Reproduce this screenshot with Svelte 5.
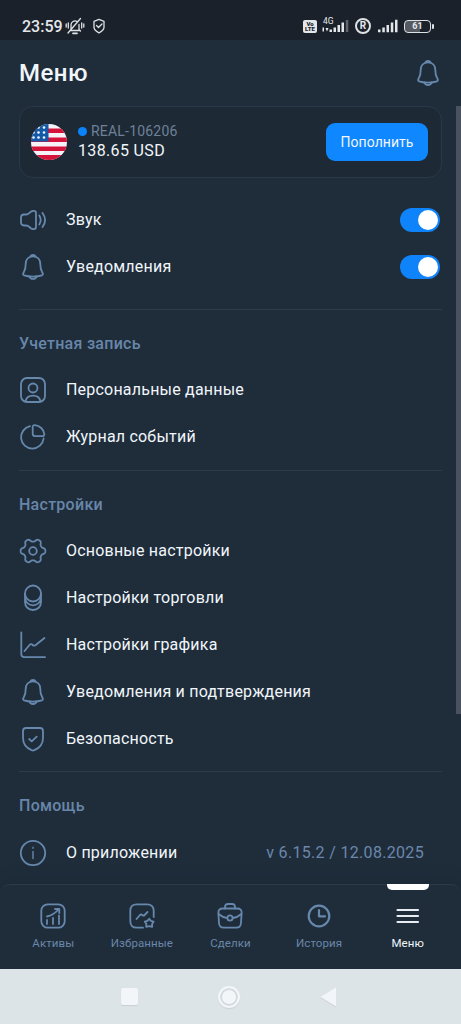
<script lang="ts">
  type IconName = 'sound' | 'bell' | 'person' | 'pie' | 'gear' | 'coins' | 'chart' | 'shield' | 'info'
  type TabIcon = 'assets' | 'favorites' | 'deals' | 'history' | 'menu'

  interface MenuItem {
    icon: IconName
    label: string
    note?: string
  }

  interface Section {
    title: string
    items: MenuItem[]
  }

  interface Tab {
    id: TabIcon
    label: string
  }

  const sections: Section[] = [
    {
      title: 'Учетная запись',
      items: [
        { icon: 'person', label: 'Персональные данные' },
        { icon: 'pie', label: 'Журнал событий' },
      ],
    },
    {
      title: 'Настройки',
      items: [
        { icon: 'gear', label: 'Основные настройки' },
        { icon: 'coins', label: 'Настройки торговли' },
        { icon: 'chart', label: 'Настройки графика' },
        { icon: 'bell', label: 'Уведомления и подтверждения' },
        { icon: 'shield', label: 'Безопасность' },
      ],
    },
    {
      title: 'Помощь',
      items: [{ icon: 'info', label: 'О приложении', note: 'v 6.15.2 / 12.08.2025' }],
    },
  ]

  const tabs: Tab[] = [
    { id: 'assets', label: 'Активы' },
    { id: 'favorites', label: 'Избранные' },
    { id: 'deals', label: 'Сделки' },
    { id: 'history', label: 'История' },
    { id: 'menu', label: 'Меню' },
  ]

  // six rounded teeth around the centre of a 28px box
  const gearPath =
    'M' +
    Array.from({ length: 120 }, (_, i) => {
      const angle = (i * Math.PI) / 60
      const wave = Math.cos(6 * angle)
      const radius = 10.9 + 1.6 * Math.tanh(1.6 * wave)
      return `${(14 + radius * Math.cos(angle)).toFixed(2)} ${(14 + radius * Math.sin(angle)).toFixed(2)}`
    }).join('L') +
    'Z'

  let toggles = $state<{ icon: IconName; label: string; on: boolean }[]>([
    { icon: 'sound', label: 'Звук', on: true },
    { icon: 'bell', label: 'Уведомления', on: true },
  ])
  let activeTab = $state<TabIcon>('menu')
</script>

{#snippet icon(name: IconName)}
  <svg class="icon" viewBox="0 0 28 28" width="28" height="28">
    {#if name === 'sound'}
      <path d="M5 8.500h2.200c1.200 0 2-.4 3-1.300l1.600-1.400c1.500-1.200 5.200-1.500 5.200 1.200v14c0 2.700-3.700 2.400-5.200 1.200l-1.600-1.400c-1-.9-1.800-1.300-3-1.300H5c-2 0-3-1.200-3-3v-5c0-1.800 1-3 3-3z" />
      <path d="M20.300 9.500c1.700 2.700 1.700 6.300 0 9M23.500 7c3.200 4.300 3.200 9.700 0 14" />
    {:else if name === 'bell'}
      <path d="M14 3.300c-4.800 0-7.300 3.400-7.300 7.700 0 4.300-.5 6-1.800 8-1 1.600-1.300 2.900.2 3.400 4.500 1.500 13.300 1.500 17.800 0 1.500-.5 1.200-1.800.2-3.400-1.300-2-1.800-3.700-1.800-8 0-4.300-2.500-7.700-7.300-7.700z" />
      <path d="M11.500 3.400c.7-1.900 4.300-1.900 5 0M10.300 23.500c1 3.300 6.400 3.300 7.400 0" />
    {:else if name === 'person'}
      <rect x="2" y="2" width="24" height="24" rx="6" />
      <circle cx="14" cy="12" r="4.500" />
      <path d="M6.500 25.200c.8-3.600 3.800-5.500 7.500-5.500s6.700 1.900 7.500 5.500" />
    {:else if name === 'pie'}
      <path d="M11 3.200A11.300 11.300 0 1 0 24.600 15.500" />
      <path d="M13.700 4.200c0-1.300.8-2.100 2.100-2 5 .5 9 4 9.500 8.800.1 1.300-.7 2.200-2 2.200h-6.600c-2 0-3-.9-3-2.500z" />
    {:else if name === 'gear'}
      <circle cx="14" cy="14" r="3.800" />
      <path d={gearPath} />
    {:else if name === 'coins'}
      <circle cx="14" cy="9.500" r="8" />
      <path d="M6 10v8c0 4.700 3.500 8 8 8s8-3.300 8-8v-8M6 14.500c.8 4 4 6.800 8 6.800s7.200-2.800 8-6.800" />
    {:else if name === 'chart'}
      <path d="M2.300 1.500V23c0 2 1 3.200 3 3.200H26" />
      <path d="M5.500 20l5-6c1-1.100 2.200-1 3.200 0s2.300.9 3.300-.2L25.500 7" />
    {:else if name === 'shield'}
      <path d="M4 6c0-2 1-3 3-3h14c2 0 3 1 3 3v7c0 6-3.500 10-8.600 12.200-1 .4-1.800.4-2.800 0C7.500 23 4 19 4 13z" />
      <path d="M10.200 14l2.500 2.300 5-4.600" />
    {:else if name === 'info'}
      <circle cx="14" cy="14" r="12.200" />
      <path class="thin" d="M14 12.500v7M14 8.300v1" />
    {/if}
  </svg>
{/snippet}

<div class="phone">
  <header class="status">
    <span class="clock">23:59</span>
    <svg class="mute" viewBox="0 0 20 18" width="20" height="18">
      <path d="M5 13.500h10M6 12.500V8a4 4 0 0 1 6-3.500M14 7.500v5l1.500 1.500M3 16L15.500 1.500M1.200 7v3M3.300 6v5M16.700 6v5M18.800 7v3" />
      <path d="M8 16.300h4" stroke-width="1.800" />
    </svg>
    <svg class="guard" viewBox="0 0 14 16" width="14" height="16">
      <path d="M7 1.300l5 2v6c0 2.500-2.500 4.300-5 5.500-2.500-1.200-5-3-5-5.500v-6z" />
      <path d="M4.500 7.500l2 2 3.500-3.500" />
    </svg>
    <div class="signals">
      <span class="volte"><span>Vo</span><span>LTE</span></span>
      <span class="cell">
        <span class="net">4G</span>
        <svg viewBox="0 0 28 18" width="28" height="18">
          <path class="solid" d="M.5 10.500H2v4H.5zM3.500 11h3L5 14.500zM7.500 12.500H10V15H7.500zM11.500 10.500H14V15h-2.500zM15.500 8H18v7h-2.500zM19.500 5.500H22V15h-2.500z" />
          <path class="solid dim" d="M23.800 3h2.500v12h-2.500z" />
        </svg>
      </span>
      <span class="roaming">R</span>
      <svg class="bars" viewBox="0 0 21 14" width="21" height="14">
        <path class="solid" d="M0 10.500h2.500v2.700H0zM4.300 8.500h2.500v4.700H4.300zM8.500 6H11v7.200H8.500zM12.800 3.500h2.500v9.700h-2.500zM17 .8h2.500v12.400H17z" />
      </svg>
      <span class="battery">61</span>
    </div>
  </header>

  <div class="title-bar">
    <h1>Меню</h1>
    {@render icon('bell')}
  </div>

  <main>
    <div class="account">
      <svg class="flag" viewBox="0 0 36 36" width="36" height="36">
        <clipPath id="flag-round"><circle cx="18" cy="18" r="18" /></clipPath>
        <g clip-path="url(#flag-round)">
          <rect width="36" height="36" fill="#f6f3f8" />
          <path fill="#d4143a" d="M0 4.500h36V9H0zM0 13.500h36V18H0zM0 22.500h36V27H0zM0 31h36v5H0z" />
          <rect width="17.500" height="17.500" fill="#1459a6" />
          {#each [3.5, 8.5, 13.5] as y (y)}
            {#each [2.5, 7.5, 13] as x (x)}
              <circle cx={x} cy={y} r="1.300" fill="#f2f8ff" />
            {/each}
          {/each}
        </g>
      </svg>
      <div class="account-info">
        <div class="account-id"><i></i>REAL-106206</div>
        <div class="balance">138.65 USD</div>
      </div>
      <button type="button" class="deposit">Пополнить</button>
    </div>

    <section class="toggles">
      {#each toggles as item (item.label)}
        <div class="row">
          {@render icon(item.icon)}
          <span class="label">{item.label}</span>
          <button
            type="button"
            class="switch"
            class:on={item.on}
            aria-label={item.label}
            onclick={() => (item.on = !item.on)}
          ></button>
        </div>
      {/each}
    </section>

    {#each sections as section (section.title)}
      <section>
        <h2>{section.title}</h2>
        {#each section.items as item (item.label)}
          <div class="row">
            {@render icon(item.icon)}
            <span class="label">{item.label}</span>
            {#if item.note}
              <span class="note">{item.note}</span>
            {/if}
          </div>
        {/each}
      </section>
    {/each}
    <div class="scrollbar"></div>
  </main>

  <nav class="tabs">
    {#each tabs as tab (tab.id)}
      <button type="button" class="tab" class:active={activeTab === tab.id} onclick={() => (activeTab = tab.id)}>
        <svg class="icon" viewBox="0 0 28 28" width="28" height="28">
          {#if tab.id === 'assets'}
            <rect x="2.300" y="2.300" width="23.400" height="23.400" rx="6.500" />
            <path d="M8 18v4M14 16v6M20 13.500V22M8 14.500c4.500-1 8.500-3.500 12-7.500M16 7h4.300v4" />
          {:else if tab.id === 'favorites'}
            <path d="M15 25.700H9c-4.500 0-6.700-2.200-6.700-6.700V9c0-4.500 2.200-6.700 6.700-6.700h10c4.500 0 6.700 2.200 6.700 6.700v6" />
            <path d="M8.500 17l3.500-4c.8-.8 1.500-.8 2.300 0s1.500.8 2.300 0l2.900-3" />
            <path d="M21.200 16.800l1.700 2.100 2.700.7-1.500 2.400.1 2.900-3-.7-3 .7.100-2.900-1.500-2.400 2.700-.7z" />
          {:else if tab.id === 'deals'}
            <path d="M9 6.500V5c0-2 1-3 3-3h4c2 0 3 1 3 3v1.500" />
            <path d="M7 6.500h14c3.500 0 4.800 1.500 4.600 4.500l-.6 10c-.2 3.200-1.800 4.700-4.800 4.700H7.800C4.800 25.700 3.200 24.200 3 21L2.400 11C2.200 8 3.500 6.500 7 6.500z" />
            <path d="M2.600 12c2.800 2.500 5.500 3.600 8.600 4M25.400 12c-2.800 2.500-5.500 3.600-8.600 4" />
            <circle cx="14" cy="16" r="2.600" />
          {:else if tab.id === 'history'}
            <g class="bold">
              <circle cx="14" cy="14" r="10.300" />
              <path d="M14 8v6.300h6" />
            </g>
          {:else}
            <path class="bold" d="M3.500 8h20.500M3.500 14h20.500M3.500 20h20.500" />
          {/if}
        </svg>
        <span>{tab.label}</span>
      </button>
    {/each}
  </nav>

  <footer class="system">
    <span class="recent"></span>
    <span class="home"></span>
    <svg viewBox="0 0 17 20" width="17" height="20"><path d="M.5 10L16 .5v19z" /></svg>
  </footer>
</div>

<style>
  :global(body) {
    margin: 0;
    background: #1f2d3b;
  }

  .phone {
    box-sizing: border-box;
    display: flex;
    flex-direction: column;
    width: 461px;
    height: 1024px;
    overflow: hidden;
    background: #1f2d3b;
    color: #f1f6fa;
    font-family: Roboto, sans-serif;
  }

  button {
    border: 0;
    padding: 0;
    background: none;
    color: inherit;
    font: inherit;
  }

  svg {
    display: block;
    flex: none;
    fill: none;
    stroke-linecap: round;
    stroke-linejoin: round;
  }

  .icon {
    stroke: #6788ad;
    stroke-width: 1.8;
  }

  .icon .thin {
    stroke-width: 1.4;
  }

  .icon .bold {
    stroke-width: 2.2;
  }

  /* status bar */
  .status {
    box-sizing: border-box;
    display: flex;
    align-items: center;
    height: 40px;
    padding: 12px 25px 0 22px;
    background: #1b212b;
    color: #e4e7ea;
  }

  .status svg {
    stroke: #dfe2e5;
    stroke-width: 1.3;
  }

  .status .solid {
    fill: #e4e7ea;
    stroke: none;
  }

  .status .dim {
    opacity: 0.35;
  }

  .clock {
    width: 43px;
    font-size: 16px;
    font-weight: 500;
  }

  .guard {
    margin-left: 7px;
  }

  .signals {
    display: flex;
    align-items: center;
    margin-left: auto;
  }

  .volte {
    display: flex;
    flex-direction: column;
    align-items: center;
    justify-content: center;
    width: 14px;
    height: 13px;
    margin-right: 5px;
    border-radius: 2px;
    background: #e4e7ea;
    color: #1b212b;
    font-size: 6px;
    font-weight: 900;
    line-height: 5.5px;
  }

  .cell {
    position: relative;
    margin-right: 5px;
  }

  .net {
    position: absolute;
    top: 0;
    left: 1px;
    font-size: 8.5px;
    line-height: 8px;
  }

  .roaming {
    box-sizing: border-box;
    width: 16px;
    height: 16px;
    margin-right: 7px;
    border: 2px solid #dfe2e5;
    border-radius: 50%;
    font-size: 10px;
    font-weight: 700;
    line-height: 12px;
    text-align: center;
  }

  .bars {
    margin-right: 5px;
  }

  .battery {
    position: relative;
    box-sizing: border-box;
    width: 27px;
    height: 13px;
    margin-right: 5px;
    border: 1.5px solid #dfe2e5;
    border-radius: 4px;
    background: linear-gradient(90deg, #565b62 60%, transparent 60%);
    font-size: 9px;
    font-weight: 700;
    line-height: 11px;
    text-align: center;
  }

  .battery::after {
    position: absolute;
    top: 3px;
    right: -4px;
    width: 2px;
    height: 5px;
    border-radius: 1px;
    background: #dfe2e5;
    content: '';
  }

  /* page header */
  .title-bar {
    box-sizing: border-box;
    display: flex;
    align-items: center;
    justify-content: space-between;
    height: 66px;
    padding: 0 19px 1px;
  }

  h1 {
    margin: 0;
    font-size: 24px;
    font-weight: 500;
    letter-spacing: 0.5px;
  }

  main {
    position: relative;
    flex: 1;
    min-height: 0;
    padding: 0 19px;
  }

  .scrollbar {
    position: absolute;
    top: 0;
    right: 0;
    width: 5px;
    height: 608px;
    background: #4a525f;
  }

  .account {
    box-sizing: border-box;
    display: flex;
    align-items: center;
    height: 72px;
    padding: 0 13px 0 11px;
    border: 1px solid #293847;
    border-radius: 14px;
    background: #1d2934;
  }

  .account-info {
    flex: 1;
    margin: -2px 0 0 11px;
  }

  .account-id {
    display: flex;
    align-items: center;
    color: #6e8199;
    font-size: 14px;
    letter-spacing: 0.2px;
    line-height: 20px;
  }

  .account-id i {
    width: 9px;
    height: 9px;
    margin-right: 4px;
    border-radius: 50%;
    background: #0b84fb;
  }

  .balance {
    font-size: 16px;
    letter-spacing: 0.35px;
    line-height: 20px;
  }

  .deposit {
    width: 102px;
    height: 38px;
    border-radius: 9px;
    background: #0f87ff;
    font-size: 14px;
    letter-spacing: 0.05px;
  }

  section {
    padding-bottom: 9px;
  }

  section:nth-child(3) {
    padding-bottom: 10px;
  }

  .toggles {
    padding: 18px 0 19px;
  }

  section + section {
    border-top: 1px solid #2b3b4c;
  }

  h2 {
    margin: 0;
    padding: 24px 0 12px;
    color: #6886a9;
    font-size: 16px;
    font-weight: 500;
    letter-spacing: 0.27px;
    line-height: 20px;
  }

  section:nth-child(5) h2 {
    padding-bottom: 13px;
  }

  .row {
    display: flex;
    align-items: center;
    height: 47px;
  }

  .label {
    flex: 1;
    margin-left: 19px;
    font-size: 16px;
    letter-spacing: 0.21px;
  }

  .note {
    margin-right: 18px;
    color: #6b87ab;
    font-size: 16px;
    letter-spacing: 0.32px;
  }

  .switch {
    box-sizing: border-box;
    width: 40px;
    height: 24px;
    margin-right: 2px;
    padding: 2px;
    border-radius: 12px;
    background: #3a4a5b;
  }

  .switch::before {
    display: block;
    width: 20px;
    height: 20px;
    border-radius: 50%;
    background: #fff;
    content: '';
  }

  .switch.on {
    background: #0f83fa;
  }

  .switch.on::before {
    margin-left: 16px;
  }

  /* bottom navigation */
  .tabs {
    position: relative;
    box-sizing: border-box;
    display: flex;
    height: 85px;
    padding: 0 9px;
    border-top: 1px solid #2a3b4a;
    border-radius: 10px 10px 0 0;
    background: #1f2d3b;
    box-shadow: 0 -3px 14px #1a243180;
  }

  .tab {
    position: relative;
    display: flex;
    flex: 1;
    flex-direction: column;
    align-items: center;
    padding-top: 17px;
    color: #6a86a8;
    font-size: 11.5px;
    letter-spacing: 0.1px;
  }

  .tab span {
    margin-top: 5px;
    line-height: 16px;
  }

  .tab.active {
    color: #f1f6fa;
  }

  .tab.active .icon {
    stroke: #e6ecf1;
  }

  .tab.active::before {
    position: absolute;
    top: -1px;
    width: 42px;
    height: 6px;
    border-radius: 0 0 5px 5px;
    background: #fff;
    content: '';
  }

  .system {
    position: relative;
    display: flex;
    align-items: center;
    height: 55px;
    padding-left: 121px;
    background: #dde4e8;
  }

  .recent {
    width: 17px;
    height: 17px;
    border-radius: 2px;
    background: #f3f6f8;
    box-shadow: 0 1px 1px #c9d0d4;
  }

  .home {
    box-sizing: border-box;
    width: 22px;
    height: 22px;
    margin: 0 80px;
    border: 2.5px solid #f3f6f8;
    border-radius: 50%;
    background: #f3f6f8;
    box-shadow: inset 0 0 0 2px #d3dade, 0 1px 1px #c9d0d4;
  }

  .system svg {
    fill: #f3f6f8;
    filter: drop-shadow(0 1px 0 #c9d0d4);
  }
</style>
